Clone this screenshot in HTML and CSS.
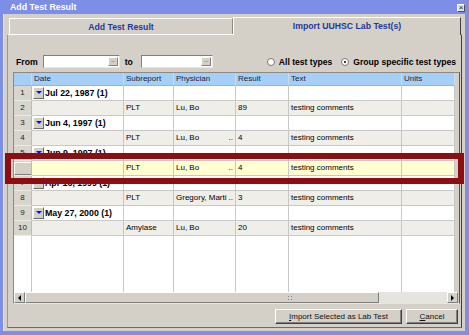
FILE: index.html
```html
<!DOCTYPE html>
<html>
<head>
<meta charset="utf-8">
<link rel="stylesheet" href="styles.css">
</head>
<body>
<div class="win">
  <div class="titlebar">
    <span class="title">Add Test Result</span>
    <span class="close">&#215;</span>
  </div>
  <div class="client">
    <div class="tabs">
      <div class="tab">Add Test Result</div>
      <div class="tab active">Import UUHSC Lab Test(s)</div>
    </div>
    <div class="panel">
      <div class="filters">
        <span class="lbl from">From</span>
        <span class="field f1"><span class="dots">...</span></span>
        <span class="lbl to">to</span>
        <span class="field f2"><span class="dots">...</span></span>
        <span class="radios">
          <span class="radio"></span><span class="rtext">All test types</span>
          <span class="radio on"></span><span class="rtext">Group specific test types</span>
        </span>
      </div>
      <div class="frame">
        <div class="grid">
          <div class="row head">
            <div class="c rh"></div><div class="c">Date</div><div class="c">Subreport</div><div class="c">Physician</div><div class="c">Result</div><div class="c">Text</div><div class="c">Units</div>
          </div>
          <div class="row grp">
            <div class="c rh">1</div><div class="c date"><span class="dd"><span class="tri"></span></span><b>Jul 22, 1987 (1)</b></div><div class="c"></div><div class="c"></div><div class="c"></div><div class="c"></div><div class="c"></div>
          </div>
          <div class="row det">
            <div class="c rh">2</div><div class="c"></div><div class="c">PLT</div><div class="c">Lu, Bo</div><div class="c">89</div><div class="c">testing comments</div><div class="c"></div>
          </div>
          <div class="row grp">
            <div class="c rh">3</div><div class="c date"><span class="dd"><span class="tri"></span></span><b>Jun 4, 1997 (1)</b></div><div class="c"></div><div class="c"></div><div class="c"></div><div class="c"></div><div class="c"></div>
          </div>
          <div class="row det">
            <div class="c rh">4</div><div class="c"></div><div class="c">PLT</div><div class="c phys"><span>Lu, Bo</span><span>..</span></div><div class="c">4</div><div class="c">testing comments</div><div class="c"></div>
          </div>
          <div class="row grp">
            <div class="c rh">5</div><div class="c date"><span class="dd"><span class="tri"></span></span><b>Jun 9, 1997 (1)</b></div><div class="c"></div><div class="c"></div><div class="c"></div><div class="c"></div><div class="c"></div>
          </div>
          <div class="row det sel">
            <div class="c rh"><span class="rhbtn"></span></div><div class="c"></div><div class="c">PLT</div><div class="c phys"><span>Lu, Bo</span><span>..</span></div><div class="c">4</div><div class="c">testing comments</div><div class="c"></div>
          </div>
          <div class="row grp">
            <div class="c rh">7</div><div class="c date"><span class="dd"><span class="tri"></span></span><b>Apr 16, 1999 (1)</b></div><div class="c"></div><div class="c"></div><div class="c"></div><div class="c"></div><div class="c"></div>
          </div>
          <div class="row det">
            <div class="c rh">8</div><div class="c"></div><div class="c">PLT</div><div class="c phys"><span>Gregory, Marti</span><span>..</span></div><div class="c">3</div><div class="c">testing comments</div><div class="c"></div>
          </div>
          <div class="row grp">
            <div class="c rh">9</div><div class="c date"><span class="dd"><span class="tri"></span></span><b>May 27, 2000 (1)</b></div><div class="c"></div><div class="c"></div><div class="c"></div><div class="c"></div><div class="c"></div>
          </div>
          <div class="row det">
            <div class="c rh">10</div><div class="c"></div><div class="c">Amylase</div><div class="c">Lu, Bo</div><div class="c">20</div><div class="c">testing comments</div><div class="c"></div>
          </div>
          <div class="row empty">
            <div class="c"></div><div class="c"></div><div class="c"></div><div class="c"></div><div class="c"></div><div class="c"></div><div class="c"></div>
          </div>
        </div>
        <div class="hscroll">
          <span class="sbtn"><span class="larr"></span></span>
          <span class="thumb"><span class="grip"></span></span>
          <span class="track"></span>
          <span class="sbtn"><span class="rarr"></span></span>
        </div>
      </div>
      <div class="buttons">
        <span class="btn b1"><u>I</u>mport Selected as Lab Test</span>
        <span class="btn b2"><u>C</u>ancel</span>
      </div>
    </div>
  </div>
  <div class="highlight"></div>
</div>
</body>
</html>
```

FILE: styles.css
```css
* { box-sizing: border-box; }
html, body { margin: 0; padding: 0; }
body {
  width: 469px;
  height: 335px;
  overflow: hidden;
  font-family: "Liberation Sans", Arial, sans-serif;
  font-size: 8px;
  color: #000;
  background: #7c8ee6;
}
.win {
  position: relative;
  width: 469px;
  height: 335px;
  background: #7c8ee6;
  padding: 0 4px 4px 3px;
  display: flex;
  flex-direction: column;
}
.titlebar {
  height: 14px;
  display: flex;
  align-items: center;
  justify-content: space-between;
  padding-left: 7px;
}
.title {
  color: #fff;
  font-weight: bold;
  font-size: 8.8px;
  line-height: 14px;
}
.close {
  width: 8px;
  height: 8px;
  margin-top: 1px;
  background: #e4e2dc;
  border: 1px solid;
  border-color: #fff #505050 #505050 #fff;
  font-size: 8px;
  line-height: 5px;
  text-align: center;
  color: #222;
  overflow: hidden;
}
.client {
  flex: 1;
  background: #d4d0c8;
  display: flex;
  flex-direction: column;
  border-left: 1px solid #e8e6e0;
}
.tabs {
  margin-top: 3px;
  height: 17px;
  display: flex;
  align-items: flex-end;
  padding-left: 5px;
}
.tab {
  width: 224px;
  height: 16px;
  border: 1px solid;
  border-color: #fff #8a877f transparent #fff;
  border-bottom: 0;
  display: flex;
  align-items: center;
  justify-content: center;
  font-weight: bold;
  font-size: 8.7px;
  color: #1b3a99;
}
.tab.active {
  width: 228px;
  height: 18px;
  margin-bottom: -1px;
  background: #d4d0c8;
  border-right-color: #404040;
  position: relative;
  z-index: 1;
  padding-bottom: 1px;
}
.panel {
  flex: 1;
  margin: 0 3px 3px 3px;
  border: 1px solid;
  border-color: #fff #404040 #6e6c66 #9d9a92;
  display: flex;
  flex-direction: column;
  padding-top: 20px;
}
.filters {
  height: 13px;
  display: flex;
  align-items: center;
  padding-right: 5px;
}
.lbl {
  font-weight: bold;
  font-size: 8.7px;
}
.from { margin-left: 8px; margin-right: 5px; }
.to { margin-left: 5px; margin-right: 8px; }
.field {
  height: 13px;
  background: #fff;
  border: 1px solid;
  border-color: #808080 #e8e6e0 #e8e6e0 #808080;
  display: flex;
  justify-content: flex-end;
  align-items: center;
  padding-right: 1px;
}
.f1 { width: 77px; }
.f2 { width: 72px; }
.dots {
  width: 10px;
  height: 9px;
  background: #d4d0c8;
  border: 1px solid;
  border-color: #fff #808080 #808080 #fff;
  font-size: 6px;
  line-height: 5px;
  letter-spacing: -0.5px;
  text-align: center;
  color: #444;
  overflow: hidden;
}
.radios {
  margin-left: auto;
  display: flex;
  align-items: center;
}
.radio {
  width: 8px;
  height: 8px;
  border-radius: 50%;
  background: #fff;
  border: 1px solid #7a7872;
  margin-right: 4px;
  display: flex;
  align-items: center;
  justify-content: center;
}
.radio.on::after {
  content: "";
  width: 2px;
  height: 2px;
  border-radius: 50%;
  background: #000;
}
.rtext {
  font-weight: bold;
  font-size: 8.6px;
  margin-right: 9px;
}
.rtext:last-child { margin-right: 0; }
.frame {
  margin-top: 4px;
  margin-left: 5px;
  width: 447px;
  height: 232px;
  border: 1px solid;
  border-color: #8d8a83 #5a5852 #e8e6e0 #8d8a83;
  background: #d4d0c8;
  display: flex;
  flex-direction: column;
}
.grid {
  width: 441px;
  flex: 1;
  display: flex;
  flex-direction: column;
}
.row {
  display: grid;
  grid-template-columns: 18px 92px 50px 62px 53px 113px 53px;
  height: 15px;
  background: #fff;
}
.c {
  border-right: 1px solid #c8c8c8;
  border-bottom: 1px solid #c8c8c8;
  padding-left: 2px;
  white-space: nowrap;
  overflow: hidden;
  line-height: 14px;
  font-size: 8px;
}
.row.head {
  height: 13px;
  background: #a6cff7;
}
.row.head .c {
  line-height: 12px;
  color: #1c1c3a;
  border-right-color: #c6dcf2;
  border-bottom-color: #9ab4cc;
}
.row.head .rh { background: #a6cff7; }
.rh {
  background: #d8d5cd;
  text-align: center;
  padding-left: 0;
  border-right-color: #bebbb3;
  border-bottom-color: #eceae4;
  color: #222;
}
.det { background: #efeee9; }
.sel { background: #ffffd2; }
.sel .rh { padding: 1px 0 0 0; }
.rhbtn {
  display: block;
  width: 18px;
  height: 13px;
  background: #d4d0c8;
  border: 1px solid;
  border-color: #fff #808080 #808080 #fff;
}
.date {
  display: flex;
  align-items: center;
  padding-left: 1px;
}
.dd {
  width: 11px;
  height: 12px;
  margin-right: 1px;
  background: #d4d0c8;
  border: 1px solid;
  border-color: #fff #6a6862 #6a6862 #fff;
  display: flex;
  justify-content: center;
  padding-top: 3px;
  flex: none;
}
.tri {
  width: 0;
  height: 0;
  border-left: 3px solid transparent;
  border-right: 3px solid transparent;
  border-top: 3px solid #0010ff;
}
.date b {
  font-size: 8.8px;
  font-weight: bold;
}
.phys {
  display: flex;
  justify-content: space-between;
  padding-right: 2px;
}
.row.empty {
  height: 56px;
  background: #fff;
}
.row.empty .c { border-bottom: 0; }
.hscroll {
  height: 11px;
  display: flex;
  flex: none;
}
.sbtn, .thumb {
  background: #d4d0c8;
  border: 1px solid;
  border-color: #fff #808080 #808080 #fff;
  display: flex;
  align-items: center;
  justify-content: center;
}
.sbtn { width: 11px; }
.thumb { width: 354px; }
.track { width: 68px; background: #e6e4de; }
.larr {
  width: 0; height: 0;
  border-top: 3px solid transparent;
  border-bottom: 3px solid transparent;
  border-right: 3px solid #000;
}
.rarr {
  width: 0; height: 0;
  border-top: 3px solid transparent;
  border-bottom: 3px solid transparent;
  border-left: 3px solid #000;
}
.grip {
  width: 5px;
  height: 5px;
  margin-left: 175px;
  background-image: radial-gradient(circle, #8a8780 0.8px, transparent 1px);
  background-size: 3px 3px;
}
.buttons {
  margin-top: 5px;
  height: 15px;
  display: flex;
  justify-content: flex-end;
  gap: 4px;
  padding-right: 3px;
}
.btn {
  height: 15px;
  background: #d4d0c8;
  border: 1px solid;
  border-color: #fff #404040 #404040 #fff;
  box-shadow: inset -1px -1px 0 #808080;
  display: flex;
  align-items: center;
  justify-content: center;
  font-size: 8px;
  color: #111;
}
.b1 { width: 127px; }
.b2 { width: 52px; }
.highlight {
  position: absolute;
  left: 5px;
  top: 153px;
  width: 459px;
  height: 31px;
  border: 6px solid #8c0e12;
}
```
